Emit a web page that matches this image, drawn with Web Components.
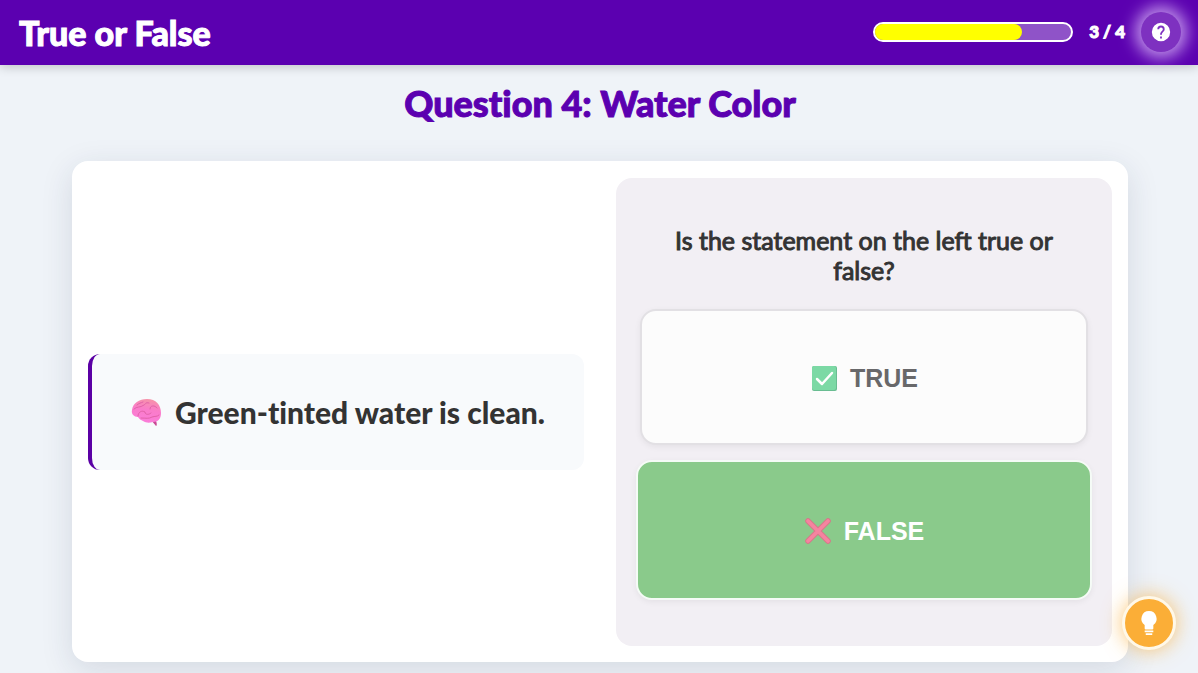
<!DOCTYPE html>
<html lang="en">
<head>
<meta charset="utf-8">
<meta name="viewport" content="width=device-width, initial-scale=1">
<title>True or False</title>
<style>
  html { height: 100%; }
  body { margin: 0; min-height: 100%; background: #eff3f8; color: #333; font-family: Lato, "Open Sans", sans-serif; overflow: hidden auto; scrollbar-width: none; }
</style>
</head>
<body>
<quiz-app></quiz-app>
<script>
const define = (name, html) => {
  const template = document.createElement('template');
  template.innerHTML = html;
  customElements.define(name, class extends HTMLElement {
    constructor() {
      super();
      this.attachShadow({ mode: 'open' }).append(template.content.cloneNode(true));
    }
  });
};

define('quiz-progress', `
<style>
  :host { display: flex; align-items: center; gap: 16px; }
  .track { box-sizing: border-box; width: 200px; height: 20px; border: 2px solid #fff; border-radius: 10px; background: #8f53c8; overflow: hidden; }
  .bar { width: 75%; height: 100%; border-radius: 0 8px 8px 0; background: #ff0; }
  .count { font-size: 17px; line-height: 20px; font-weight: 900; color: #fff; white-space: nowrap; -webkit-text-stroke: 1px #fff; }
</style>
<div class="track" role="progressbar" aria-label="Progress" aria-valuemin="0" aria-valuemax="4" aria-valuenow="3"><div class="bar"></div></div>
<span class="count"><slot></slot></span>`);

define('help-button', `
<style>
  :host { display: block; }
  button { display: grid; place-items: center; width: 40px; height: 40px; padding: 0; border: 0; border-radius: 50%; background: #7e31c0; color: #fff; box-shadow: 0 0 16px 6px #c193ea; cursor: pointer; }
  svg { display: block; }
</style>
<button type="button" aria-label="Help">
  <svg width="22" height="22" viewBox="0 0 24 24" fill="currentColor"><path d="M12 2a10 10 0 1 0 0 20 10 10 0 0 0 0-20zm1 17h-2v-2h2v2zm2.070-7.750-.9.920C13.450 12.900 13 13.500 13 15h-2v-.5c0-1.100.450-2.100 1.170-2.830l1.240-1.260c.370-.360.590-.860.590-1.410a2 2 0 0 0-4 0H8a4 4 0 1 1 8 0c0 .880-.360 1.680-.930 2.250z"/></svg>
</button>`);

define('app-header', `
<style>
  :host { display: flex; align-items: center; justify-content: space-between; box-sizing: border-box; min-height: 65px; padding: 0 17px 2px 19px; background: #5b00b0; box-shadow: 0 2px 10px rgba(0,0,0,.2); }
  h1 { margin: 0; padding-top: 2px; font-size: 34px; line-height: 40px; font-weight: 900; color: #fff; -webkit-text-stroke: 1px #fff; }
  .tools { display: flex; align-items: center; gap: 16px; }
</style>
<h1><slot></slot></h1>
<div class="tools"><slot name="tools"></slot></div>`);

define('statement-box', `
<style>
  :host { display: flex; align-items: center; justify-content: center; gap: 12px; box-sizing: border-box; min-height: 116px; padding: 16px 32px; border-left: 4px solid #5b00a5; border-radius: 12px; background: #f8fafc; }
  svg { flex: none; }
  p { margin: 0; font-size: 30px; line-height: 36px; font-weight: 900; color: #333; font-variant-ligatures: none; }
</style>
<svg width="32" height="32" viewBox="0 0 32 32" aria-hidden="true">
  <defs><linearGradient id="brain" x1="0.6" y1="0" x2="0.4" y2="1"><stop offset="0" stop-color="#f693a8"/><stop offset=".45" stop-color="#fa7cca"/><stop offset="1" stop-color="#fb7dda"/></linearGradient></defs>
  <path d="M20 24l5 6c1 0 1-3 0-5z" fill="#c94a96"/>
  <path d="M1 14C2 7 8 3 16 3c9 0 14 6 14 14 0 6-3 9-8 9-4 1-7 1-10-1-2-1-4-2-5-4-4 0-7-3-6-7z" fill="url(#brain)"/>
  <path d="M3 13c3-3 6-1 10-4 2-1 1-3 5-2M7 20c0-4 4-6 7-4 0 3 4 3 6 1M19 13c0-4 5-4 7-1M10 22c5 0 8 1 11-1 3-1 5 0 7-2M6 9c2-2 4-2 6-3" fill="none" stroke="#e162a8" stroke-width="1" stroke-linecap="round"/>
</svg>
<p><slot></slot></p>`);

define('answer-button', `
<style>
  :host { display: flex; min-height: 136px; }
  button { flex: 1; display: flex; align-items: center; justify-content: center; gap: 12px; box-sizing: border-box; padding: 4px 2px 2px; border: 2px solid #e2e0e4; border-radius: 16px; background: #fcfcfc; color: #68686a; font: bold 25px/32px "Liberation Sans", Arial, sans-serif; box-shadow: 0 2px 6px rgba(0,0,0,.06); cursor: pointer; }
  :host([selected]) { min-height: 140px; margin: -1px -4px; }
  :host([selected]) button { border-color: #f5fbf6; background: #8aca8b; color: #fff; }
</style>
<button type="button"><slot name="icon"></slot><span><slot></slot></span></button>`);

define('check-icon', `
<style>:host { display: block; } svg { display: block; }</style>
<svg width="28" height="28" viewBox="0 0 28 28" aria-hidden="true"><rect x="2" y="2" width="25" height="25" rx="2" fill="#69bd92"/><rect x="2" y="2" width="24" height="24" rx="2" fill="#7cd9a5"/><path d="M7 15l5 5 10-11" fill="none" stroke="#fff" stroke-width="2.500" stroke-linecap="round" stroke-linejoin="round"/></svg>`);

define('cross-icon', `
<style>:host { display: block; } svg { display: block; }</style>
<svg width="28" height="28" viewBox="0 0 28 28" aria-hidden="true"><path d="M4 4l20 20M24 4L4 24" fill="none" stroke="#d9758a" stroke-width="5.500" stroke-linecap="round"/><path d="M4 4l20 20M24 4L4 24" fill="none" stroke="#f584a0" stroke-width="3.800" stroke-linecap="round"/></svg>`);

define('answer-panel', `
<style>
  :host { display: flex; flex-direction: column; gap: 16px; box-sizing: border-box; padding: 47px 24px; border-radius: 16px; background: #f2eff4; }
  p { margin: 0 24px 8px; text-align: center; font-size: 25px; line-height: 30px; color: #333; -webkit-text-stroke: 1px #333; }
</style>
<p><slot name="prompt"></slot></p>
<slot></slot>`);

define('question-card', `
<style>
  :host { display: grid; grid-template-columns: minmax(0, 1fr) minmax(0, 1fr); gap: 32px; align-items: center; box-sizing: border-box; max-width: 1056px; margin: 0 auto; padding: 17px 16px 16px; border-radius: 16px; background: #fff; box-shadow: 0 8px 32px rgba(30,50,80,.13); }
</style>
<slot></slot>`);

define('hint-button', `
<style>
  :host { display: block; position: fixed; right: 22px; bottom: 23px; }
  button { display: grid; place-items: center; box-sizing: border-box; width: 54px; height: 54px; padding: 0; border: 3px solid #fff8e8; border-radius: 50%; background: #fbae37; color: #fff; box-shadow: 0 0 20px rgba(251,174,55,.7); cursor: pointer; }
  svg { display: block; }
</style>
<button type="button" aria-label="Hint"><svg width="26" height="26" viewBox="0 0 24 24" fill="currentColor"><path d="M12 1a7 7 0 0 0-4 12.740V17a1 1 0 0 0 1 1h6a1 1 0 0 0 1-1v-3.260A7 7 0 0 0 12 1zM8 19h8v1.500H8zM9 21.500h6V23H9z"/></svg></button>`);

define('quiz-app', `
<style>
  :host { display: block; }
  main { padding: 18px 24px 11px 26px; }
  h2 { margin: 0 0 38px; text-align: center; font-size: 36px; line-height: 40px; font-weight: 900; color: #5b00b0; -webkit-text-stroke: 1px #5b00b0; font-variant-ligatures: none; }
</style>
<app-header>True or False
  <quiz-progress slot="tools">3 / 4</quiz-progress>
  <help-button slot="tools"></help-button>
</app-header>
<main>
  <h2>Question 4: Water Color</h2>
  <question-card>
    <statement-box>Green-tinted water is clean.</statement-box>
    <answer-panel>
      <span slot="prompt">Is the statement on the left true or false?</span>
      <answer-button><check-icon slot="icon"></check-icon>TRUE</answer-button>
      <answer-button selected><cross-icon slot="icon"></cross-icon>FALSE</answer-button>
    </answer-panel>
  </question-card>
</main>
<hint-button></hint-button>`);
</script>
</body>
</html>
